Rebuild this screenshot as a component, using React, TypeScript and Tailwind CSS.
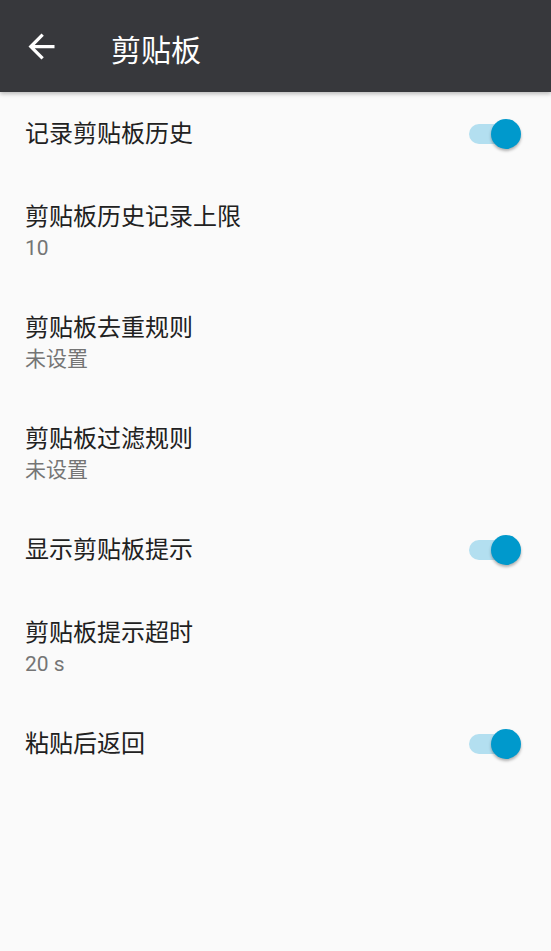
const font = { fontFamily: 'Roboto, "Noto Sans CJK SC", sans-serif' };

type Item =
  | { title: string; summary?: string; toggle?: false }
  | { title: string; toggle: true };

const items: Item[] = [
  { title: "记录剪贴板历史", toggle: true },
  { title: "剪贴板历史记录上限", summary: "10" },
  { title: "剪贴板去重规则", summary: "未设置" },
  { title: "剪贴板过滤规则", summary: "未设置" },
  { title: "显示剪贴板提示", toggle: true },
  { title: "剪贴板提示超时", summary: "20 s" },
  { title: "粘贴后返回", toggle: true },
];

function Switch() {
  return (
    <div className="relative w-[52px] h-[32px] flex items-center">
      <div className="w-[48px] h-[20px] rounded-full bg-[#b3dff0]" />
      <div className="absolute right-0 top-[1px] w-[30px] h-[30px] rounded-full bg-[#0099cc] shadow-[0_2px_3px_rgba(0,0,0,0.3)]" />
    </div>
  );
}

function Row({ item }: { item: Item }) {
  if (item.toggle) {
    return (
      <div className="h-[83px] flex items-center justify-between pl-[25px] pr-[30px]">
        <span className="text-[24px] leading-[32px] text-[#212121]">{item.title}</span>
        <Switch />
      </div>
    );
  }
  return (
    <div className="h-[111px] flex flex-col pt-[25px] pl-[25px]">
      <span className="text-[24px] leading-[34px] text-[#212121]">{item.title}</span>
      <span className="text-[21px] leading-[29px] text-[#757575]">{item.summary}</span>
    </div>
  );
}

export default function App() {
  return (
    <div className="w-[551px] h-[951px] bg-[#fafafa] overflow-hidden" style={font}>
      <header className="relative z-10 h-[92px] bg-[#37383c] flex items-center shadow-[0_2px_4px_rgba(0,0,0,0.25)]">
        <div className="w-[82px] flex justify-center">
          <svg width="39" height="39" viewBox="0 0 24 24" fill="#ffffff">
            <path d="M20 11H7.83l5.59-5.59L12 4l-8 8 8 8 1.41-1.41L7.83 13H20v-2z" />
          </svg>
        </div>
        <h1 className="ml-[29px] text-[30px] leading-[40px] text-white pt-[9px]">剪贴板</h1>
      </header>
      <div>
        {items.map((item) => (
          <Row key={item.title} item={item} />
        ))}
      </div>
    </div>
  );
}
